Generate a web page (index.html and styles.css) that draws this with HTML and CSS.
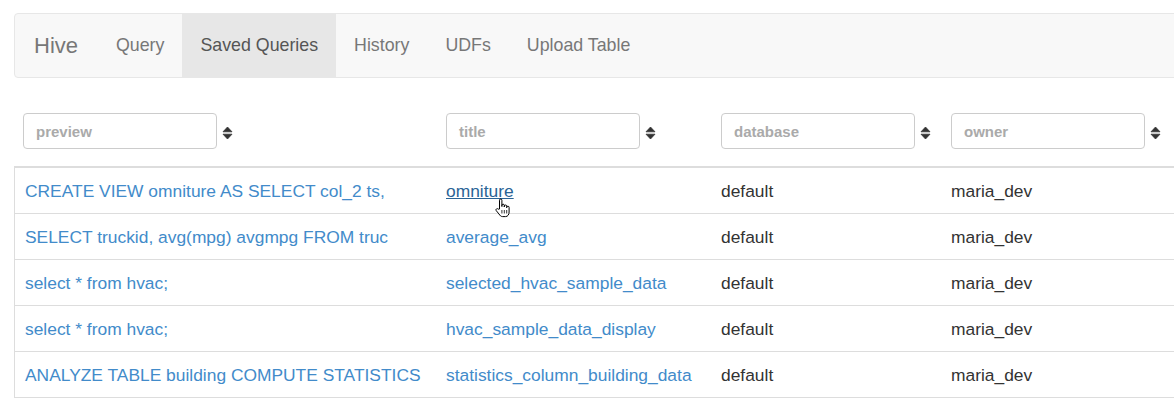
FILE: index.html
```html
<!DOCTYPE html>
<html>
<head>
<meta charset="utf-8">
<link rel="stylesheet" href="styles.css">
</head>
<body>
<div class="page">
  <nav class="navbar">
    <span class="brand">Hive</span>
    <ul class="nav">
      <li><a>Query</a></li>
      <li class="active"><a>Saved Queries</a></li>
      <li><a>History</a></li>
      <li><a>UDFs</a></li>
      <li><a>Upload Table</a></li>
    </ul>
  </nav>

  <div class="filters">
    <div class="fcell"><div class="input">preview</div><svg class="sort" viewBox="0 0 10 14"><path d="M5 1 L9.5 5.8 H0.5 Z M0.5 8.2 H9.5 L5 13 Z"/></svg></div>
    <div class="fcell"><div class="input">title</div><svg class="sort" viewBox="0 0 10 14"><path d="M5 1 L9.5 5.8 H0.5 Z M0.5 8.2 H9.5 L5 13 Z"/></svg></div>
    <div class="fcell"><div class="input">database</div><svg class="sort" viewBox="0 0 10 14"><path d="M5 1 L9.5 5.8 H0.5 Z M0.5 8.2 H9.5 L5 13 Z"/></svg></div>
    <div class="fcell"><div class="input">owner</div><svg class="sort" viewBox="0 0 10 14"><path d="M5 1 L9.5 5.8 H0.5 Z M0.5 8.2 H9.5 L5 13 Z"/></svg></div>
  </div>

  <div class="table">
    <div class="row">
      <div class="cell"><a class="link">CREATE VIEW omniture AS SELECT col_2 ts,</a></div>
      <div class="cell"><span class="hoverwrap"><a class="link hover">omniture</a><svg class="cursor" viewBox="0 0 16 20"><path d="M5.5 11 V2.2 a1.2 1.2 0 0 1 2.4 0 V8.5 V7.4 a1.2 1.2 0 0 1 2.4 0 V9 V8.2 a1.2 1.2 0 0 1 2.4 0 V9.8 V9.4 a1.2 1.2 0 0 1 2.4 0 V14 c0 2.4-1.2 4.6-3.6 4.6 H8.6 c-1.6 0-2.6-1-3.6-2.6 L2.2 12.6 a1.2 1.2 0 0 1 2-1.4 Z" fill="#fff" stroke="#000" stroke-width="1" stroke-linejoin="round"/><path d="M7.9 12 V15.5 M10.3 12 V15.5 M12.7 12 V15.5" stroke="#000" stroke-width="0.8"/></svg></span></div>
      <div class="cell">default</div>
      <div class="cell">maria_dev</div>
    </div>
    <div class="row">
      <div class="cell"><a class="link">SELECT truckid, avg(mpg) avgmpg FROM truc</a></div>
      <div class="cell"><a class="link">average_avg</a></div>
      <div class="cell">default</div>
      <div class="cell">maria_dev</div>
    </div>
    <div class="row">
      <div class="cell"><a class="link">select * from hvac;</a></div>
      <div class="cell"><a class="link">selected_hvac_sample_data</a></div>
      <div class="cell">default</div>
      <div class="cell">maria_dev</div>
    </div>
    <div class="row">
      <div class="cell"><a class="link">select * from hvac;</a></div>
      <div class="cell"><a class="link">hvac_sample_data_display</a></div>
      <div class="cell">default</div>
      <div class="cell">maria_dev</div>
    </div>
    <div class="row">
      <div class="cell"><a class="link">ANALYZE TABLE building COMPUTE STATISTICS</a></div>
      <div class="cell"><a class="link">statistics_column_building_data</a></div>
      <div class="cell">default</div>
      <div class="cell">maria_dev</div>
    </div>
  </div>
</div>
</body>
</html>
```

FILE: styles.css
```css
html, body {
  margin: 0;
  padding: 0;
  background: #fff;
  overflow: hidden;
}
body {
  font-family: "Liberation Sans", Arial, sans-serif;
  font-size: 17.4px;
  color: #333;
}
.page {
  padding: 13px 0 0 14px;
  width: 1200px;
}
.navbar {
  display: flex;
  align-items: stretch;
  height: 63px;
  background: #f8f8f8;
  border: 1px solid #e7e7e7;
  border-radius: 4px;
  box-sizing: content-box;
}
.brand {
  font-size: 22px;
  color: #777;
  line-height: 63px;
  padding: 0 20px 0 19px;
}
.nav {
  display: flex;
  list-style: none;
  margin: 0;
  padding: 0;
  font-size: 17.8px;
}
.nav li a {
  display: block;
  line-height: 63px;
  padding: 0 18px;
  color: #777;
}
.nav li.active a {
  background: #e7e7e7;
  color: #555;
}
.filters {
  display: grid;
  grid-template-columns: 422px 275px 230px 1fr;
  margin-top: 35px;
  height: 53px;
}
.fcell {
  display: flex;
  align-items: flex-start;
  padding-left: 10px;
}
.input {
  box-sizing: border-box;
  width: 194px;
  height: 36px;
  border: 1px solid #ccc;
  border-radius: 4px;
  padding: 0 12px;
  font-size: 15px;
  font-weight: bold;
  color: #aaa;
  line-height: 36px;
}
.filters .fcell:first-child .input {
  margin-left: -1px;
}
.sort {
  width: 11px;
  height: 14px;
  margin: 13px 0 0 5px;
  fill: #333;
  stroke: #333;
  stroke-width: 0.8;
  stroke-linejoin: round;
}
.table {
  border-left: 1px solid #ddd;
  border-top: 2px solid #ddd;
  border-bottom: 1px solid #ddd;
}
.row {
  display: grid;
  grid-template-columns: 421px 275px 230px 1fr;
  height: 45px;
  align-items: center;
}
.row + .row {
  border-top: 1px solid #ddd;
}
.cell {
  padding-left: 10px;
  white-space: nowrap;
  line-height: 22px;
}
.link {
  color: #428bca;
  text-decoration: none;
}
.link.hover {
  color: #2a6496;
  text-decoration: underline;
}
.hoverwrap {
  position: relative;
}
.cursor {
  position: absolute;
  left: 48px;
  top: 17px;
  width: 16px;
  height: 20px;
}
```
